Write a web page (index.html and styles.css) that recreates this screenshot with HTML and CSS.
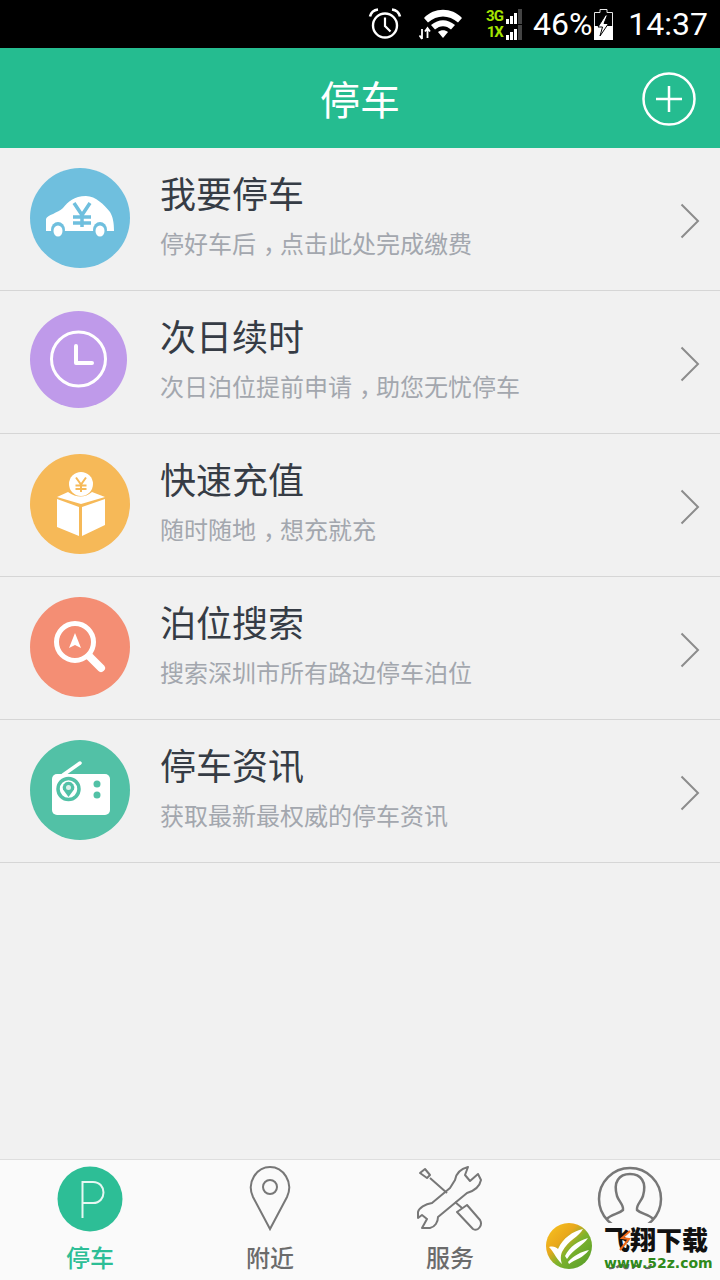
FILE: index.html
```html
<!DOCTYPE html>
<html lang="zh-CN">
<head>
    <meta charset="UTF-8">
    <meta name="viewport" content="width=device-width, initial-scale=1.0">
    <title>停车</title>
    <link rel="stylesheet" href="styles.css">
</head>
<body>
<div class="phone">
    <div class="status-bar">
        <svg class="alarm" width="34" height="32" viewBox="0 0 34 32">
            <circle cx="17" cy="17.500" r="12" fill="none" stroke="#fff" stroke-width="2.400"/>
            <path d="M17 9.500V18l5.500 5.500" fill="none" stroke="#fff" stroke-width="2.200"/>
            <path d="M2 8.500C3 4.500 6 2 10 1.500M32 8.500C31 4.500 28 2 24 1.500" fill="none" stroke="#fff" stroke-width="2.600"/>
        </svg>
        <svg class="wifi" width="44" height="32" viewBox="0 0 44 32">
            <path d="M5 10C15 -1 33 -1 43 10L39 14.500C30 6.500 18 6.500 9 14.500Z" fill="#fff"/>
            <path d="M12 17C20 10.500 28 10.500 36 17L32 21.500C27 17 21 17 16 21.500Z" fill="#fff"/>
            <path d="M19 24C22 21.500 26 21.500 29 24L24 30Z" fill="#fff"/>
            <path d="M3 31V21M.5 27.500L3 31M8.500 20V30M6 23.500L8.500 20L11 23.500" fill="none" stroke="#fff" stroke-width="1.800"/>
        </svg>
        <div class="signal">
            <div class="signal-row"><span>3G</span><i class="b1"></i><i class="b2"></i><i class="b3"></i><i class="b4"></i></div>
            <div class="signal-row"><span>1X</span><i class="b1"></i><i class="b2"></i><i class="b3"></i><i class="b4"></i></div>
        </div>
        <span class="percent">46%</span>
        <svg class="battery" width="19" height="31" viewBox="0 0 19 31">
            <path d="M6 .5h7v3h5.500v27h-18v-27h5.500z" fill="none" stroke="#e6e6e6" stroke-width="1"/>
            <rect x="0" y="17" width="19" height="14" fill="#fff"/>
            <path d="M11.500 6L4 18h4.500L6 27l8.500-12.500H10L13.500 6z" fill="#fff" stroke="#000" stroke-width="1"/>
        </svg>
        <span class="clock">14:37</span>
    </div>

    <header class="top-bar">
        <h1>停车</h1>
        <svg class="add-btn" width="54" height="54" viewBox="0 0 54 54">
            <circle cx="27" cy="27" r="25.500" fill="none" stroke="#fff" stroke-width="2.500"/>
            <path d="M27 14V40M14 27H40" stroke="#fff" stroke-width="2.500"/>
        </svg>
    </header>

    <main class="menu">
        <div class="menu-item">
            <svg class="menu-icon" width="100" height="100" viewBox="0 0 100 100">
                <circle cx="50" cy="50" r="50" fill="#6fbfde"/>
                <path d="M16 63V51C17 47 28 45 33 40C38 34 44 28 56 28C66 28 74 37 80 44C83 49 84 55 84 63Z" fill="#fff"/>
                <ellipse cx="28" cy="62" rx="7" ry="8" fill="#6fbfde"/>
                <ellipse cx="70" cy="62" rx="7" ry="8" fill="#6fbfde"/>
                <ellipse cx="28" cy="63" rx="4.500" ry="5.500" fill="#fff"/>
                <ellipse cx="70" cy="63" rx="4.500" ry="5.500" fill="#fff"/>
                <path d="M44 35L52 47L60 35M52 47V59M43 49H61M43 55H61" fill="none" stroke="#6fbfde" stroke-width="3.500"/>
            </svg>
            <div class="menu-text">
                <div class="menu-title">我要停车</div>
                <div class="menu-desc">停好车后<span class="comma">，</span>点击此处完成缴费</div>
            </div>
            <svg class="chevron" width="20" height="36" viewBox="0 0 20 36"><path d="M1.500 1.500L18 18L1.500 34.500" fill="none" stroke="#8c8c8c" stroke-width="2"/></svg>
        </div>

        <div class="menu-item">
            <svg class="menu-icon" width="100" height="100" viewBox="0 0 100 100">
                <circle cx="48.500" cy="48.500" r="48.500" fill="#bf9aea"/>
                <circle cx="48.500" cy="48" r="27" fill="none" stroke="#fff" stroke-width="3"/>
                <path d="M46 35V52H62" fill="none" stroke="#fff" stroke-width="4" stroke-linecap="round" stroke-linejoin="round"/>
            </svg>
            <div class="menu-text">
                <div class="menu-title">次日续时</div>
                <div class="menu-desc">次日泊位提前申请<span class="comma">，</span>助您无忧停车</div>
            </div>
            <svg class="chevron" width="20" height="36" viewBox="0 0 20 36"><path d="M1.500 1.500L18 18L1.500 34.500" fill="none" stroke="#8c8c8c" stroke-width="2"/></svg>
        </div>

        <div class="menu-item">
            <svg class="menu-icon" width="100" height="100" viewBox="0 0 100 100">
                <circle cx="50" cy="50" r="50" fill="#f6b958"/>
                <circle cx="51" cy="30" r="12" fill="#fff"/>
                <path d="M46 23.500L51 30.500L56 23.500M51 30.500V38M45.500 31.500H56.500M45.500 35H56.500" fill="none" stroke="#f6b958" stroke-width="2"/>
                <path d="M27 45L49 53V82L27 73ZM52 53L75 45V71L52 82Z" fill="#fff"/>
                <path d="M27 43L38 38Q51 47 62 38L75 43L51 50Z" fill="#fff"/>
            </svg>
            <div class="menu-text">
                <div class="menu-title">快速充值</div>
                <div class="menu-desc">随时随地<span class="comma">，</span>想充就充</div>
            </div>
            <svg class="chevron" width="20" height="36" viewBox="0 0 20 36"><path d="M1.500 1.500L18 18L1.500 34.500" fill="none" stroke="#8c8c8c" stroke-width="2"/></svg>
        </div>

        <div class="menu-item">
            <svg class="menu-icon" width="100" height="100" viewBox="0 0 100 100">
                <circle cx="50" cy="50" r="50" fill="#f48e74"/>
                <circle cx="45" cy="45" r="18.500" fill="none" stroke="#fff" stroke-width="5"/>
                <path d="M60 60L71 71" stroke="#fff" stroke-width="8" stroke-linecap="round"/>
                <path d="M45 36L39 51L45 48L51 51Z" fill="#fff"/>
            </svg>
            <div class="menu-text">
                <div class="menu-title">泊位搜索</div>
                <div class="menu-desc">搜索深圳市所有路边停车泊位</div>
            </div>
            <svg class="chevron" width="20" height="36" viewBox="0 0 20 36"><path d="M1.500 1.500L18 18L1.500 34.500" fill="none" stroke="#8c8c8c" stroke-width="2"/></svg>
        </div>

        <div class="menu-item">
            <svg class="menu-icon" width="100" height="100" viewBox="0 0 100 100">
                <circle cx="50" cy="50" r="50" fill="#52c1a6"/>
                <path d="M33 35L50 23" stroke="#fff" stroke-width="3.500" stroke-linecap="round"/>
                <rect x="22" y="34" width="58" height="41" rx="5" fill="#fff"/>
                <circle cx="38.500" cy="49" r="10.500" fill="none" stroke="#52c1a6" stroke-width="3.500"/>
                <path d="M33 49.500A5.800 5.800 0 1 1 44 49.500L38.500 57Z" fill="#52c1a6"/>
                <circle cx="38.500" cy="47.500" r="2.500" fill="#d8f1ea"/>
                <circle cx="67" cy="44" r="3.500" fill="#52c1a6"/>
                <circle cx="67" cy="55" r="3.500" fill="#52c1a6"/>
            </svg>
            <div class="menu-text">
                <div class="menu-title">停车资讯</div>
                <div class="menu-desc">获取最新最权威的停车资讯</div>
            </div>
            <svg class="chevron" width="20" height="36" viewBox="0 0 20 36"><path d="M1.500 1.500L18 18L1.500 34.500" fill="none" stroke="#8c8c8c" stroke-width="2"/></svg>
        </div>
    </main>

    <nav class="tab-bar">
        <div class="tab tab-active">
            <svg width="66" height="66" viewBox="0 0 66 66">
                <circle cx="33" cy="33" r="32.500" fill="#2dbe96"/>
                <path d="M25.500 52V16H36C50 16 50 37 36 37H25.500" fill="none" stroke="#e6f7f2" stroke-width="2"/>
            </svg>
            <span>停车</span>
        </div>
        <div class="tab">
            <svg width="66" height="66" viewBox="0 0 66 66">
                <path d="M33 63L16 31C9 16 20 1 33 1C46 1 57 16 50 31Z" fill="none" stroke="#777" stroke-width="2"/>
                <circle cx="33" cy="21" r="7" fill="none" stroke="#777" stroke-width="2"/>
            </svg>
            <span>附近</span>
        </div>
        <div class="tab">
            <svg width="66" height="66" viewBox="0 0 66 66">
                <path d="M33 22L38 14C39 8 43 3 51 1L48 9L53 15L61 8L64 14C63 19 60 24 50 27L21 51C21 56 18 61 13 62L5 62L10 53L5 49L1 52V46C2 42 8 38 15 37Z" fill="none" stroke="#777" stroke-width="2" stroke-linejoin="round"/>
                <path d="M3 7L8 3L13 9L10 12ZM13 12L30 27M38 36L45 42" fill="none" stroke="#777" stroke-width="2" stroke-linejoin="round"/>
                <path d="M40 46L50 39L63 54C66 59 61 66 56 63Z" fill="none" stroke="#777" stroke-width="2" stroke-linejoin="round"/>
            </svg>
            <span>服务</span>
        </div>
        <div class="tab">
            <svg width="66" height="66" viewBox="0 0 66 66">
                <circle cx="33" cy="33" r="31" fill="none" stroke="#777" stroke-width="2.500"/>
                <path d="M10 53C14 48 22 48 26 44C27 39 22 36 20 30C16 16 22 8 33 8C44 8 50 16 46 30C44 36 39 39 40 44C44 48 52 48 56 53" fill="none" stroke="#777" stroke-width="2.500"/>
            </svg>
            <span>我的</span>
        </div>
    </nav>

    <div class="watermark">
        <svg class="wm-logo" width="46" height="46" viewBox="0 0 46 46">
            <defs>
                <linearGradient id="wmFill" x1="0" y1="0" x2="1" y2="1">
                    <stop offset="0" stop-color="#f9c51f"/>
                    <stop offset=".35" stop-color="#e9a81c"/>
                    <stop offset=".55" stop-color="#7fb32c"/>
                    <stop offset="1" stop-color="#4f9a2a"/>
                </linearGradient>
            </defs>
            <circle cx="23" cy="23" r="23" fill="url(#wmFill)"/>
            <path d="M3 24C7 23 10 24 12 26C17 15 27 8 37 6C33 14 22 17 16 29C14 34 15 38 16 41C11 37 8 29 3 24Z" fill="#fff"/>
            <path d="M19 33C24 23 32 18 42 15C37 23 28 25 21 36ZM22 39C28 32 35 29 43 27C37 35 30 36 23 41Z" fill="#fff"/>
        </svg>
        <div class="wm-text">
            <div class="wm-name">飞翔下载</div>
            <div class="wm-url">www.52z.com</div>
            <svg class="wm-bolt" width="14" height="22" viewBox="0 0 14 22"><path d="M11 1L3 8L10 9L1 20" fill="none" stroke="#ef6a1a" stroke-width="2"/></svg>
        </div>
    </div>
</div>
</body>
</html>
```

FILE: styles.css
```css
* {
    box-sizing: border-box;
}

body {
    margin: 0;
    background-color: #f1f1f1;
    font-family: "Noto Sans CJK SC", "Noto Sans", sans-serif;
}

.phone {
    position: relative;
    width: 720px;
    height: 1280px;
    display: flex;
    flex-direction: column;
    overflow: hidden;
}

.status-bar {
    height: 48px;
    flex-shrink: 0;
    background-color: #000;
    color: #fff;
    display: flex;
    align-items: center;
    justify-content: flex-end;
    padding-right: 12px;
    font-family: Roboto, sans-serif;
    font-size: 32px;
}

.alarm {
    margin-right: 17px;
}

.wifi {
    margin-right: 22px;
}

.signal {
    width: 37px;
    margin-right: 11px;
    display: flex;
    flex-direction: column;
    gap: 1px;
}

.signal-row {
    display: flex;
    align-items: flex-end;
    justify-content: flex-end;
    gap: 1px;
    height: 15px;
    color: #a4e400;
    font-size: 15px;
    font-weight: 700;
    line-height: 15px;
}

.signal-row span {
    margin-right: 2px;
    letter-spacing: -1px;
}

.signal-row i {
    display: block;
    width: 3px;
    background-color: #fff;
}

.signal-row .b1 {
    height: 5px;
}

.signal-row .b2 {
    height: 8px;
}

.signal-row .b3 {
    height: 11px;
}

.signal-row .b4 {
    width: 4px;
    height: 15px;
    background-color: #444;
}

.percent {
    margin-right: 2px;
}

.battery {
    margin-right: 15px;
}

.top-bar {
    position: relative;
    height: 100px;
    flex-shrink: 0;
    background-color: #25bc90;
    display: flex;
    align-items: center;
    justify-content: center;
}

.top-bar h1 {
    margin: 0;
    color: #fff;
    font-size: 40px;
    font-weight: 400;
}

.add-btn {
    position: absolute;
    right: 24px;
    top: 24px;
}

.menu {
    flex: 1;
}

.menu-item {
    height: 143px;
    padding: 20px 20px 0 30px;
    border-bottom: 1px solid #d6d6d6;
    display: flex;
    align-items: flex-start;
}

.menu-icon {
    flex-shrink: 0;
    margin-right: 30px;
}

.menu-text {
    flex: 1;
    margin-top: -1px;
}

.menu-title {
    color: #363c45;
    font-size: 36px;
    line-height: 50px;
}

.menu-desc {
    margin-top: 9px;
    color: #a3a7ae;
    font-size: 24px;
    line-height: 34px;
}

/* half-width comma, padded back to a full cell so it sits in the middle */
.comma {
    font-feature-settings: "halt";
    padding: 0 5px 0 7px;
}

.chevron {
    margin-top: 35px;
}

.tab-bar {
    height: 121px;
    flex-shrink: 0;
    background-color: #fafafa;
    border-top: 1px solid #dedede;
    display: flex;
}

.tab {
    width: 180px;
    padding-top: 6px;
    display: flex;
    flex-direction: column;
    align-items: center;
    color: #6b6b6b;
    font-size: 24px;
    font-weight: 500;
    line-height: 36px;
}

.tab svg {
    margin-bottom: 7px;
}

.tab-active {
    color: #2dbe96;
}

.watermark {
    position: absolute;
    left: 546px;
    top: 1223px;
    display: flex;
    align-items: flex-start;
}

.wm-logo {
    display: block;
}

/* covers the tab label under it, the url runs out below */
.wm-text {
    position: relative;
    width: 108px;
    height: 41px;
    margin-left: 12px;
    background-color: #fafafa;
}

.wm-name {
    color: #111;
    font-size: 26px;
    font-weight: 900;
    line-height: 32px;
}

.wm-url {
    color: #2f8a1a;
    font-family: "DejaVu Sans", sans-serif;
    font-size: 14px;
    font-weight: 700;
    line-height: 16px;
    white-space: nowrap;
}

.wm-bolt {
    position: absolute;
    left: 15px;
    top: 7px;
}
```
